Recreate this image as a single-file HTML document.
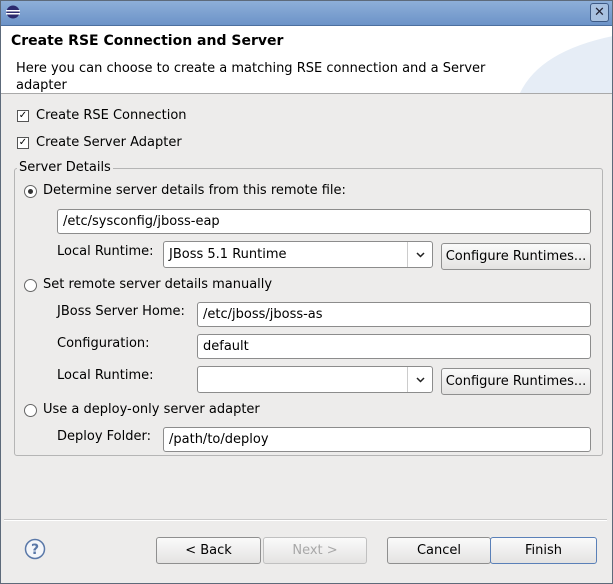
<html><head><style>
body{margin:0;width:613px;height:584px;overflow:hidden;font-family:"DejaVu Sans",sans-serif;font-size:13px;color:#000;background:#edeceb;position:relative}
.a{position:absolute}
.tb{left:0;top:0;width:613px;height:25px;background:linear-gradient(#8fb0d9,#6c93c8);border-bottom:1px solid #4c6f9f}
.hd{left:0;top:26px;width:613px;height:67px;background:#fff;border-bottom:1px solid #a9a9a9}
.fr{left:0;top:0;width:611px;height:582px;border:1px solid #5d6a7a;pointer-events:none}
.in{background:#fff;border:1px solid #8c8c8c;border-radius:3px;box-sizing:border-box;padding:4px 0 0 5px;white-space:nowrap}
.bt{background:linear-gradient(#fafafa,#e4e3e2);border:1px solid #8f8f8f;border-radius:3px;box-sizing:border-box;text-align:center;line-height:26px}
.cb{width:10px;height:10px;border:1px solid #555;background:#fff;font-size:10px;line-height:10px;text-align:center}
.rd{width:11px;height:11px;border:1px solid #666;border-radius:50%;background:#fff}
.dd{position:absolute;top:0;height:25px;border-left:1px solid #ccc;width:25px}
</style></head><body>
<div class="a tb"></div>
<svg class="a" style="left:6px;top:5px" width="14" height="14"><circle cx="7" cy="7" r="6.5" fill="#2c2a6e"/><rect x="0" y="5" width="14" height="1.5" fill="#fff"/><rect x="0" y="8" width="14" height="1.5" fill="#fff"/></svg>
<div class="a" style="left:590px;top:3px;width:17px;height:17px;border:1px solid #3d5a85;border-radius:3px;background:#a8c1e0;text-align:center;line-height:17px;font-size:13px;color:#223">✕</div>
<div class="a hd"></div>
<svg class="a" style="left:480px;top:26px" width="133" height="67"><path d="M133 10 Q60 25 40 67 L133 67Z" fill="#e6edf6"/></svg>
<div class="a" style="left:11px;top:33px;font-weight:bold;font-size:14px">Create RSE Connection and Server</div>
<div class="a" style="left:16px;top:60px;line-height:17px">Here you can choose to create a matching RSE connection and a Server<br>adapter</div>
<div class="a cb" style="left:17px;top:110px">✓</div><div class="a" style="left:36px;top:108px">Create RSE Connection</div>
<div class="a cb" style="left:17px;top:137px">✓</div><div class="a" style="left:36px;top:135px">Create Server Adapter</div>
<div class="a" style="left:14px;top:168px;width:587px;height:286px;border:1px solid #b5b5b5;border-radius:3px"></div>
<div class="a" style="left:17px;top:160px;background:#edeceb;padding:0 2px">Server Details</div>
<div class="a rd" style="left:24px;top:185px"><div class="a" style="left:3px;top:3px;width:5px;height:5px;border-radius:50%;background:#333"></div></div>
<div class="a" style="left:43px;top:183px">Determine server details from this remote file:</div>
<div class="a in" style="left:57px;top:209px;width:534px;height:25px">/etc/sysconfig/jboss-eap</div>
<div class="a" style="left:57px;top:244px">Local Runtime:</div>
<div class="a in" style="left:163px;top:241px;width:270px;height:27px;padding-top:5px">JBoss 5.1 Runtime<div class="dd" style="left:243px"><svg width="25" height="25"><path d="M9 11 L12.5 14.5 L16 11" fill="none" stroke="#222" stroke-width="1.5"/></svg></div></div>
<div class="a bt" style="left:441px;top:243px;width:150px;height:27px">Configure Runtimes...</div>
<div class="a rd" style="left:24px;top:279px"></div><div class="a" style="left:43px;top:277px">Set remote server details manually</div>
<div class="a" style="left:57px;top:304px">JBoss Server Home:</div>
<div class="a in" style="left:197px;top:302px;width:394px;height:25px">/etc/jboss/jboss-as</div>
<div class="a" style="left:57px;top:336px">Configuration:</div>
<div class="a in" style="left:197px;top:334px;width:394px;height:25px">default</div>
<div class="a" style="left:57px;top:368px">Local Runtime:</div>
<div class="a in" style="left:197px;top:366px;width:236px;height:27px"><div class="dd" style="left:209px"><svg width="25" height="25"><path d="M9 11 L12.5 14.5 L16 11" fill="none" stroke="#222" stroke-width="1.5"/></svg></div></div>
<div class="a bt" style="left:441px;top:368px;width:150px;height:27px">Configure Runtimes...</div>
<div class="a rd" style="left:24px;top:404px"></div><div class="a" style="left:43px;top:402px">Use a deploy-only server adapter</div>
<div class="a" style="left:57px;top:429px">Deploy Folder:</div>
<div class="a in" style="left:163px;top:427px;width:428px;height:25px">/path/to/deploy</div>
<div class="a" style="left:4px;top:519px;width:603px;border-top:1px solid #c8c8c8;border-bottom:1px solid #fff"></div>
<svg class="a" style="left:24px;top:538px" width="22" height="22"><circle cx="11" cy="11" r="9.5" fill="#f4f6fa" stroke="#5a78a8" stroke-width="1.5"/><text x="11" y="16" text-anchor="middle" font-family="DejaVu Sans" font-size="14" font-weight="bold" fill="#5a78a8">?</text></svg>
<div class="a bt" style="left:156px;top:537px;width:105px;height:27px">&lt; Back</div>
<div class="a bt" style="left:263px;top:537px;width:104px;height:27px;color:#a8a8a8;border-color:#c0c0c0">Next &gt;</div>
<div class="a bt" style="left:387px;top:537px;width:104px;height:27px">Cancel</div>
<div class="a bt" style="left:490px;top:537px;width:107px;height:27px;border-color:#5a80b8">Finish</div>
<div class="a fr"></div>
</body></html>
